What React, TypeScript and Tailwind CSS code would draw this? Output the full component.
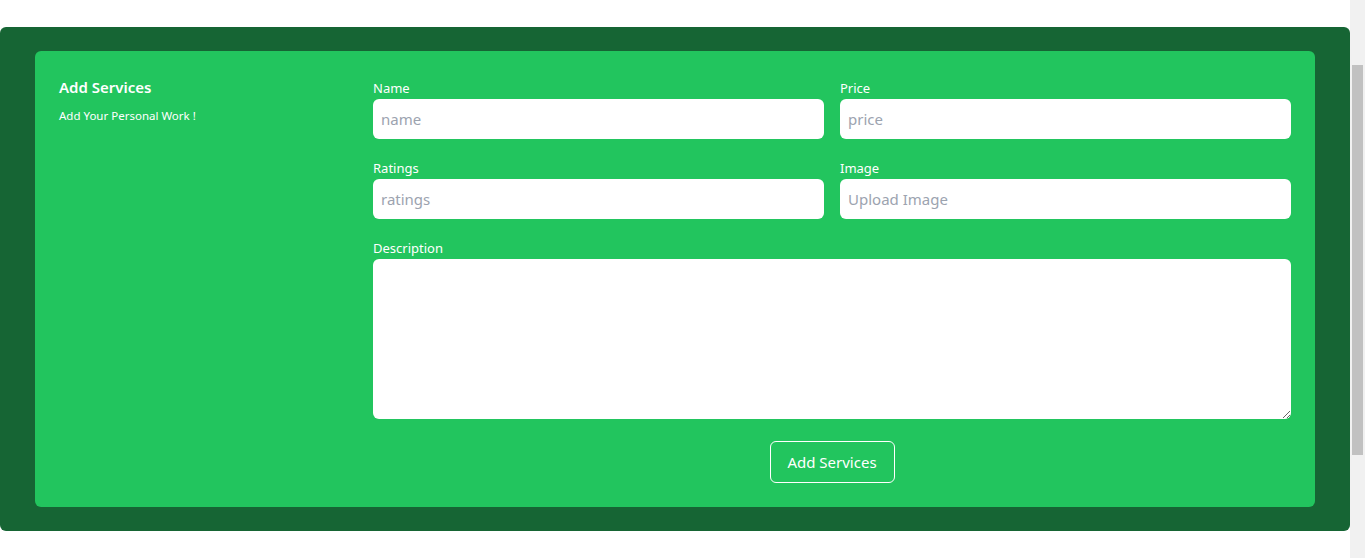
export default function App() {
  const font = { fontFamily: '"Noto Sans", "Open Sans", sans-serif' };
  const inputCls =
    "mt-px block h-10 w-full rounded-md bg-white px-2 text-[15px] text-gray-800 outline-none placeholder:text-[#9ca3af]";
  return (
    <div className="flex h-[558px] overflow-hidden bg-white" style={font}>
      <div className="w-[1350px] shrink-0 pt-[27px]">
        <div className="w-full rounded-md bg-[#166534] px-[35px] py-[24px]">
          <div className="grid grid-cols-4 gap-6 rounded-md bg-[#22c55e] px-6 pt-[25px] pb-[24px] text-white">
            <div>
              <h2 className="text-[15px] font-semibold leading-[22px]">Add Services</h2>
              <p className="mt-[10px] text-[11.5px] leading-[16px]">Add Your Personal Work !</p>
            </div>
            <div className="col-span-3">
              <div className="grid grid-cols-2 gap-x-4 gap-y-[19px] pt-[2px]">
                <div>
                  <label className="block text-[13px] leading-[20px]">Name</label>
                  <input placeholder="name" className={inputCls} />
                </div>
                <div>
                  <label className="block text-[13px] leading-[20px]">Price</label>
                  <input placeholder="price" className={inputCls} />
                </div>
                <div>
                  <label className="block text-[13px] leading-[20px]">Ratings</label>
                  <input placeholder="ratings" className={inputCls} />
                </div>
                <div>
                  <label className="block text-[13px] leading-[20px]">Image</label>
                  <input placeholder="Upload Image" className={inputCls} />
                </div>
                <div className="col-span-2">
                  <label className="block text-[13px] leading-[20px]">Description</label>
                  <textarea className="mt-px block h-[160px] w-full rounded-md bg-white px-2 py-1 text-[15px] text-gray-800 outline-none" />
                </div>
              </div>
              <div className="mt-[22px] flex justify-center">
                <button className="h-[42px] w-[125px] rounded-md border border-white text-[15px] text-white">
                  Add Services
                </button>
              </div>
            </div>
          </div>
        </div>
      </div>
      <div className="flex h-full flex-1 flex-col bg-[#f1f1f1] px-[2px] pt-[65px]">
        <div className="h-[390px] w-full bg-[#c1c1c1]" />
      </div>
    </div>
  );
}
